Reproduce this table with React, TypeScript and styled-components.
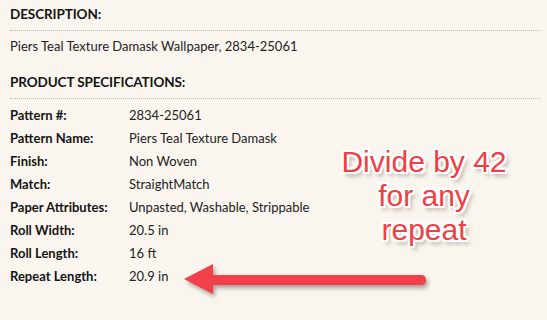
import React from 'react';
import styled, { createGlobalStyle } from 'styled-components';

interface Spec {
  label: string;
  value: string;
}

const specs: Spec[] = [
  { label: 'Pattern #:', value: '2834-25061' },
  { label: 'Pattern Name:', value: 'Piers Teal Texture Damask' },
  { label: 'Finish:', value: 'Non Woven' },
  { label: 'Match:', value: 'StraightMatch' },
  { label: 'Paper Attributes:', value: 'Unpasted, Washable, Strippable' },
  { label: 'Roll Width:', value: '20.5 in' },
  { label: 'Roll Length:', value: '16 ft' },
  { label: 'Repeat Length:', value: '20.9 in' },
];

const GlobalStyle = createGlobalStyle`
  html, body {
    margin: 0;
    padding: 0;
    background: #faf6ef;
  }
  body {
    font-family: Lato, 'Open Sans', sans-serif;
    color: #1c1c1c;
  }
`;

const Page = styled.div`
  position: relative;
  width: 547px;
  height: 320px;
  padding: 4px 7px 0 10px;
  box-sizing: border-box;
  overflow: hidden;
`;

const SectionTitle = styled.h3`
  margin: 0;
  padding-bottom: 6px;
  font-size: 13.5px;
  line-height: 20px;
  font-weight: 700;
  letter-spacing: -0.1px;
  text-transform: uppercase;
  color: #141414;
  border-bottom: 1px dotted #bdb8b0;
  & + & {
    margin-top: 0;
  }
`;

const Description = styled.p<{ $gap: number }>`
  margin: 5px 0 ${(p) => p.$gap}px;
  font-size: 13px;
  line-height: 20px;
  color: #222;
`;

const SpecList = styled.dl`
  margin: 5px 0 0;
  display: grid;
  grid-template-columns: 119px 1fr;
  grid-auto-rows: 23px;
  font-size: 13px;
  line-height: 23px;
`;

const SpecLabel = styled.dt`
  margin: 0;
  font-weight: 700;
  color: #141414;
`;

const SpecValue = styled.dd`
  margin: 0;
  color: #222;
`;

const Note = styled.div`
  position: absolute;
  left: 324px;
  top: 145px;
  width: 200px;
  text-align: center;
  font-family: 'Liberation Sans', Arial, sans-serif;
  font-size: 30px;
  line-height: 34px;
  color: #f03f44;
  text-shadow:
    -2px 0 0 #fff, 2px 0 0 #fff, 0 -2px 0 #fff, 0 2px 0 #fff,
    -2px -2px 0 #fff, 2px -2px 0 #fff, -2px 2px 0 #fff, 2px 2px 0 #fff,
    3px 4px 4px rgba(90, 80, 70, 0.55);
`;

const Arrow = styled.svg`
  position: absolute;
  left: 180px;
  top: 258px;
  overflow: visible;
  filter: drop-shadow(2px 3px 2px rgba(80, 70, 60, 0.5));
`;

export default function App() {
  return (
    <Page>
      <GlobalStyle />
      <SectionTitle>Description:</SectionTitle>
      <Description $gap={16}>Piers Teal Texture Damask Wallpaper, 2834-25061</Description>
      <SectionTitle>Product Specifications:</SectionTitle>
      <SpecList>
        {specs.map((s) => (
          <React.Fragment key={s.label}>
            <SpecLabel>{s.label}</SpecLabel>
            <SpecValue>{s.value}</SpecValue>
          </React.Fragment>
        ))}
      </SpecList>
      <Note>
        Divide by 42
        <br />
        for any
        <br />
        repeat
      </Note>
      <Arrow width="250" height="40" viewBox="0 0 250 40">
        <path d="M4 21 L33 6 L33 17 L241 17 Q246 17 246 22 Q246 27 241 27 L33 27 L33 36 Z" fill="#f2404a" />
      </Arrow>
    </Page>
  );
}
